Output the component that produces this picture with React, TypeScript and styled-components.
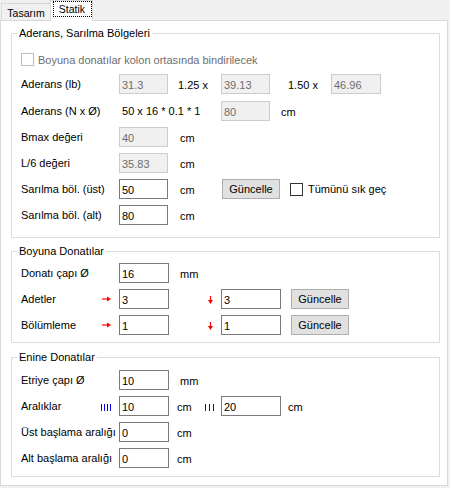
import styled, { createGlobalStyle } from 'styled-components';

const GlobalStyle = createGlobalStyle`
  html, body {
    margin: 0;
    padding: 0;
    background: #f0f0f0;
  }
  body {
    font-family: "Liberation Sans", Arial, sans-serif;
    font-size: 11px;
    color: #000;
  }
  * {
    box-sizing: border-box;
  }
`;

const Window = styled.div`
  width: 450px;
  height: 488px;
  background: #f0f0f0;
  overflow: hidden;
`;

const TabStrip = styled.div`
  display: flex;
  align-items: flex-end;
  height: 20px;
  padding-left: 1px;
  position: relative;
  z-index: 1;
`;

const Tab = styled.div<{ $active?: boolean }>`
  display: flex;
  justify-content: center;
  align-items: ${p => (p.$active ? 'flex-start' : 'center')};
  width: ${p => (p.$active ? 43 : 50)}px;
  height: ${p => (p.$active ? 21 : 17)}px;
  margin-left: ${p => (p.$active ? -1 : 0)}px;
  margin-bottom: ${p => (p.$active ? -1 : 0)}px;
  padding-top: ${p => (p.$active ? 0 : 2)}px;
  border: 1px solid #d9d9d9;
  border-bottom: none;
  background: ${p => (p.$active ? '#fff' : '#f0f0f0')};
  font-size: 10.5px;
  white-space: nowrap;
`;

const FocusRect = styled.span`
  display: flex;
  align-items: center;
  justify-content: center;
  width: 39px;
  height: 16px;
  margin-left: 1px;
  border: 1px dotted #000;
`;

const TabPage = styled.div`
  display: flex;
  flex-direction: column;
  width: 448px;
  height: 466px;
  padding: 6px 7px 0 10px;
  background: #fff;
  border: 1px solid #d9d9d9;
`;

const Group = styled.fieldset<{ $mt?: number }>`
  margin: ${p => p.$mt ?? 0}px 0 0;
  padding: 0;
  min-width: 0;
  border: 1px solid #dcdcdc;
`;

const Legend = styled.legend`
  margin-left: 5px;
  padding: 0 2px;
  font-size: 11px;
  line-height: 13px;
`;

const GroupBody = styled.div<{ $pt: number; $pb: number }>`
  display: flex;
  flex-direction: column;
  gap: 6px;
  padding: ${p => p.$pt}px 0 ${p => p.$pb}px 9px;
`;

const Row = styled.div<{ $mb?: number }>`
  display: flex;
  align-items: center;
  height: 20px;
  margin-bottom: ${p => p.$mb ?? 0}px;
  white-space: nowrap;
`;

const CheckRow = styled.label<{ $disabled?: boolean }>`
  display: flex;
  align-items: center;
  gap: 4px;
  height: 13px;
  margin-bottom: 2px;
  color: ${p => (p.$disabled ? '#6d6d6d' : '#000')};
  white-space: nowrap;
`;

const Label = styled.span<{ $w?: number }>`
  flex: none;
  width: ${p => p.$w ?? 98}px;
  padding-top: 1px;
  line-height: 13px;
`;

const Unit = styled.span<{ $w?: number; $pl?: number }>`
  flex: none;
  width: ${p => (p.$w ? `${p.$w}px` : 'auto')};
  padding-left: ${p => p.$pl ?? 0}px;
  padding-top: 3px;
  line-height: 13px;
`;

const Cell = styled.span<{ $w: number; $pl?: number }>`
  display: flex;
  align-items: center;
  flex: none;
  width: ${p => p.$w}px;
  height: 20px;
  padding-left: ${p => p.$pl ?? 0}px;
`;

const Field = styled.input<{ $w?: number }>`
  flex: none;
  width: ${p => p.$w ?? 49}px;
  height: 20px;
  margin: 0;
  padding: 1px 0 0 2px;
  border: 1px solid #7a7a7a;
  border-radius: 0;
  background: #fff;
  color: #000;
  font: 11px "Liberation Sans", Arial, sans-serif;
  outline: none;

  &:disabled {
    background: #f0f0f0;
    border-color: #cccccc;
    color: #6d6d6d;
  }
`;

const Button = styled.button<{ $ml?: number }>`
  flex: none;
  width: 58px;
  height: 20px;
  margin: 0 0 0 ${p => p.$ml ?? 0}px;
  padding: 0;
  border: 1px solid #adadad;
  border-radius: 0;
  background: #e1e1e1;
  color: #000;
  font: 11px "Liberation Sans", Arial, sans-serif;
`;

const Box = styled.span<{ $disabled?: boolean }>`
  flex: none;
  width: 13px;
  height: 13px;
  border: 1px solid ${p => (p.$disabled ? '#bcbcbc' : '#333333')};
  background: #fff;
`;

const InlineCheck = styled.span`
  display: flex;
  align-items: center;
  gap: 5px;
  margin-left: 10px;
`;

const RightArrow = () => (
  <svg width="9" height="6" viewBox="0 0 9 6">
    <line x1="0" y1="3" x2="6" y2="3" stroke="#ff0000" strokeWidth="1.2" />
    <polygon points="5,0.5 9,3 5,5.5" fill="#ff0000" />
  </svg>
);

const DownArrow = () => (
  <svg width="5" height="8" viewBox="0 0 5 8" style={{ marginTop: 1 }}>
    <line x1="2.5" y1="0" x2="2.5" y2="5" stroke="#ff0000" strokeWidth="1.2" />
    <polygon points="0,4 5,4 2.5,8" fill="#ff0000" />
  </svg>
);

const Bars = ({ count, step }: { count: number; step: number }) => (
  <svg width={(count - 1) * step + 1} height="7" style={{ marginTop: 2 }}>
    {Array.from({ length: count }).map((_, i) => (
      <rect key={i} x={i * step} y="0" width="1" height="7" fill="#0000ff" />
    ))}
  </svg>
);

export default function App() {
  return (
    <>
      <GlobalStyle />
      <Window>
        <TabStrip>
          <Tab>Tasarım</Tab>
          <Tab $active>
            <FocusRect>Statik</FocusRect>
          </Tab>
        </TabStrip>
        <TabPage>
          <Group>
            <Legend>Aderans, Sarılma Bölgeleri</Legend>
            <GroupBody $pt={13} $pb={12}>
              <CheckRow $disabled>
                <Box $disabled />
                Boyuna donatılar kolon ortasında bindirilecek
              </CheckRow>
              <Row $mb={1}>
                <Label>Aderans (lb)</Label>
                <Field disabled defaultValue="31.3" />
                <Unit $w={53} $pl={10}>1.25 x</Unit>
                <Field disabled defaultValue="39.13" />
                <Unit $w={61} $pl={18}>1.50 x</Unit>
                <Field disabled defaultValue="46.96" $w={50} />
              </Row>
              <Row>
                <Label>Aderans (N x Ø)</Label>
                <Label $w={102}>&nbsp;50 x 16 * 0.1 * 1</Label>
                <Field disabled defaultValue="80" />
                <Unit $pl={11}>cm</Unit>
              </Row>
              <Row>
                <Label>Bmax değeri</Label>
                <Field disabled defaultValue="40" />
                <Unit $pl={12}>cm</Unit>
              </Row>
              <Row>
                <Label>L/6 değeri</Label>
                <Field disabled defaultValue="35.83" />
                <Unit $pl={12}>cm</Unit>
              </Row>
              <Row>
                <Label>Sarılma böl. (üst)</Label>
                <Field defaultValue="50" />
                <Unit $w={54} $pl={12}>cm</Unit>
                <Button>Güncelle</Button>
                <InlineCheck>
                  <Box />
                  Tümünü sık geç
                </InlineCheck>
              </Row>
              <Row>
                <Label>Sarılma böl. (alt)</Label>
                <Field defaultValue="80" />
                <Unit $pl={12}>cm</Unit>
              </Row>
            </GroupBody>
          </Group>

          <Group $mt={7}>
            <Legend>Boyuna Donatılar</Legend>
            <GroupBody $pt={5} $pb={7}>
              <Row>
                <Label>Donatı çapı Ø</Label>
                <Field defaultValue="16" $w={50} />
                <Unit $pl={11}>mm</Unit>
              </Row>
              <Row>
                <Label $w={81}>Adetler</Label>
                <Cell $w={17}><RightArrow /></Cell>
                <Field defaultValue="3" $w={50} />
                <Cell $w={52} $pl={39}><DownArrow /></Cell>
                <Field defaultValue="3" $w={60} />
                <Button $ml={10}>Güncelle</Button>
              </Row>
              <Row>
                <Label $w={81}>Bölümleme</Label>
                <Cell $w={17}><RightArrow /></Cell>
                <Field defaultValue="1" $w={50} />
                <Cell $w={52} $pl={39}><DownArrow /></Cell>
                <Field defaultValue="1" $w={60} />
                <Button $ml={10}>Güncelle</Button>
              </Row>
            </GroupBody>
          </Group>

          <Group $mt={8}>
            <Legend>Enine Donatılar</Legend>
            <GroupBody $pt={6} $pb={8}>
              <Row>
                <Label>Etriye çapı Ø</Label>
                <Field defaultValue="10" $w={50} />
                <Unit $pl={11}>mm</Unit>
              </Row>
              <Row>
                <Label $w={80}>Aralıklar</Label>
                <Cell $w={18}><Bars count={4} step={3} /></Cell>
                <Field defaultValue="10" $w={50} />
                <Unit $w={36} $pl={8}>cm</Unit>
                <Cell $w={16}><Bars count={3} step={4} /></Cell>
                <Field defaultValue="20" $w={60} />
                <Unit $pl={7}>cm</Unit>
              </Row>
              <Row>
                <Label>Üst başlama aralığı</Label>
                <Field defaultValue="0" $w={50} />
                <Unit $pl={8}>cm</Unit>
              </Row>
              <Row>
                <Label>Alt başlama aralığı</Label>
                <Field defaultValue="0" $w={50} />
                <Unit $pl={8}>cm</Unit>
              </Row>
            </GroupBody>
          </Group>
        </TabPage>
      </Window>
    </>
  );
}
